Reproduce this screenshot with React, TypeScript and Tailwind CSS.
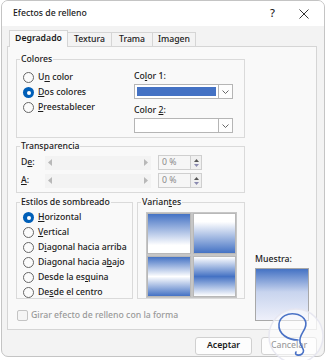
import React from "react";

const F = { fontFamily: '"Noto Sans", "Liberation Sans", sans-serif' };

function Radio({ checked }: { checked?: boolean }) {
  return checked ? (
    <span className="w-[11px] h-[11px] rounded-full bg-[#005fb8] flex items-center justify-center shrink-0">
      <span className="w-[4px] h-[4px] rounded-full bg-white" />
    </span>
  ) : (
    <span className="w-[11px] h-[11px] rounded-full border border-[#666] bg-[#fbfbfb] shrink-0" />
  );
}

function RadioRow({ checked, children }: { checked?: boolean; children: React.ReactNode }) {
  return (
    <div className="flex items-center gap-[4px] h-[15px]">
      <Radio checked={checked} />
      <span className="text-[8.7px] font-medium text-[#1b1b1b] whitespace-nowrap">{children}</span>
    </div>
  );
}

function Chevron() {
  return (
    <svg width="7" height="4" viewBox="0 0 7 4">
      <path d="M0.5 0.5 L3.5 3.5 L6.5 0.5" fill="none" stroke="#555" strokeWidth="0.9" />
    </svg>
  );
}

function ColorDrop({ color }: { color: string }) {
  return (
    <div className="flex h-[15px] w-[99px]">
      <div className="flex-1 border border-[#b5b5b5] bg-white p-[2px]">
        <div className="w-full h-full" style={{ background: color }} />
      </div>
      <div className="w-[14px] border border-l-0 border-[#b5b5b5] bg-[#fdfdfd] flex items-center justify-center">
        <Chevron />
      </div>
    </div>
  );
}

function Slider() {
  return (
    <div className="w-[106px] h-[14px] flex items-center justify-between px-[3px] bg-[#f3f3f3]">
      <svg width="4" height="7" viewBox="0 0 4 7"><path d="M4 0 L0 3.5 L4 7Z" fill="#b8b8b8" /></svg>
      <svg width="4" height="7" viewBox="0 0 4 7"><path d="M0 0 L4 3.5 L0 7Z" fill="#b8b8b8" /></svg>
    </div>
  );
}

function Spin() {
  return (
    <div className="flex h-[15px] w-[44px]">
      <div className="flex-1 border border-[#cfcfcf] bg-[#f6f6f6] text-[8.7px] text-[#8a8a8a] pl-[3px] leading-[13px]">0 %</div>
      <div className="w-[11px] border border-l-0 border-[#cfcfcf] bg-[#f0f0f0] flex flex-col items-center justify-center gap-[2px]">
        <svg width="5" height="3" viewBox="0 0 5 3"><path d="M0 3 L2.5 0 L5 3Z" fill="#555" /></svg>
        <svg width="5" height="3" viewBox="0 0 5 3"><path d="M0 0 L2.5 3 L5 0Z" fill="#8a8ab0" /></svg>
      </div>
    </div>
  );
}

function Group({ label, className, children }: { label: React.ReactNode; className?: string; children: React.ReactNode }) {
  return (
    <fieldset className={"border border-[#dadada] " + (className ?? "")}>
      <legend className="ml-[3px] px-[1px] text-[8.7px] font-medium leading-[12px] text-[#1b1b1b]">{label}</legend>
      {children}
    </fieldset>
  );
}

const B = "#4472c4";
const T = "text-[8.7px] font-medium text-[#1b1b1b]";

export default function App() {
  return (
    <div className="w-[328px] h-[360px] bg-white relative overflow-hidden" style={F}>
      <div className="ml-[1px] w-[324px] h-[357px] rounded-[7px] border border-[#c4c4c4] bg-[#f3f3f3] overflow-hidden flex flex-col">
        {/* title bar */}
        <div className="h-[25px] bg-white flex items-center pl-[11px] shrink-0">
          <span className={T}>Efectos de relleno</span>
          <span className="ml-auto text-[11px] font-medium text-[#222] mr-[24px]">?</span>
          <svg width="10" height="10" viewBox="0 0 10 10" className="mr-[15px]">
            <path d="M0.5 0.5 L9.5 9.5 M9.5 0.5 L0.5 9.5" stroke="#333" strokeWidth="1" />
          </svg>
        </div>
        <div className="flex-1 px-[5px] pt-[3px] flex flex-col">
          {/* tabs */}
          <div className="flex items-end h-[17px] pl-[2px]">
            <div className="h-[17px] w-[59px] border border-b-0 border-[#d5d5d5] bg-[#f9f9f9] text-[8.7px] font-semibold text-[#1b1b1b] flex items-center justify-center relative top-[1px] z-10">Degradado</div>
            <div className={"h-[14px] w-[44px] border border-l-0 border-b-0 border-[#d5d5d5] bg-[#f3f3f3] flex items-center justify-center " + T}>Textura</div>
            <div className={"h-[14px] w-[41px] border border-l-0 border-b-0 border-[#d5d5d5] bg-[#f3f3f3] flex items-center justify-center " + T}>Trama</div>
            <div className={"h-[14px] w-[43px] border border-l-0 border-b-0 border-[#d5d5d5] bg-[#f3f3f3] flex items-center justify-center " + T}>Imagen</div>
          </div>
          {/* panel */}
          <div className="w-[310px] h-[284px] border border-[#d5d5d5] bg-[#f9f9f9] pl-[8px] pt-[6px] flex flex-col">
            <Group label="Colores" className="w-[229px] h-[85px] flex">
              <div className="flex">
                <div className="pl-[6px] pt-[5px] w-[117px] flex flex-col">
                  <RadioRow>U<u>n</u> color</RadioRow>
                  <RadioRow checked><u>D</u>os colores</RadioRow>
                  <RadioRow><u>P</u>reestablecer</RadioRow>
                </div>
                <div className="pt-[5px] flex flex-col">
                  <span className={"leading-[13px] " + T}>Co<u>l</u>or 1:</span>
                  <div className="mt-[1px]"><ColorDrop color={B} /></div>
                  <span className={"leading-[13px] mt-[5px] " + T}>Color <u>2</u>:</span>
                  <div className="mt-[1px]"><ColorDrop color="#ffffff" /></div>
                </div>
              </div>
            </Group>
            <Group label="Transparencia" className="w-[229px] h-[53px] mt-[2px]">
              <div className="flex flex-col gap-[3px] pl-[4px] pt-[3px]">
                <div className="flex items-center">
                  <span className={"w-[24px] " + T}>D<u>e</u>:</span>
                  <Slider />
                  <div className="ml-[7px]"><Spin /></div>
                </div>
                <div className="flex items-center">
                  <span className={"w-[24px] " + T}><u>A</u>:</span>
                  <Slider />
                  <div className="ml-[7px]"><Spin /></div>
                </div>
              </div>
            </Group>
            <div className="flex mt-[3px]">
              <div className="flex flex-col">
                <div className="flex">
                  <Group label="Estilos de sombreado" className="w-[117px] h-[103px]">
                    <div className="pl-[6px] pt-[2px] flex flex-col">
                      <RadioRow checked><u>H</u>orizontal</RadioRow>
                      <RadioRow><u>V</u>ertical</RadioRow>
                      <RadioRow>D<u>i</u>agonal hacia arriba</RadioRow>
                      <RadioRow>Diagonal hacia a<u>b</u>ajo</RadioRow>
                      <RadioRow>Desde la es<u>q</u>uina</RadioRow>
                      <RadioRow>De<u>s</u>de el centro</RadioRow>
                    </div>
                  </Group>
                  <Group label={<>Varian<u>t</u>es</>} className="w-[108px] h-[103px] ml-[4px]">
                    <div className="pl-[8px] pt-[4px]">
                      <div className="grid grid-cols-2 gap-[2px] w-[91px] bg-[#c6c6c6] p-[1px]">
                        <div className="h-[41px] border border-[#b8b8b8]" style={{ background: `linear-gradient(to bottom, ${B} 0%, #ffffff 80%)` }} />
                        <div className="h-[41px] border border-[#b8b8b8]" style={{ background: `linear-gradient(to bottom, #ffffff 20%, ${B} 100%)` }} />
                        <div className="h-[41px] border border-[#b8b8b8]" style={{ background: `linear-gradient(to bottom, ${B} 0%, #ffffff 50%, ${B} 100%)` }} />
                        <div className="h-[41px] border border-[#b8b8b8]" style={{ background: `linear-gradient(to bottom, #ffffff 0%, ${B} 50%, #ffffff 100%)` }} />
                      </div>
                    </div>
                  </Group>
                </div>
                <div className="flex items-center gap-[3px] mt-[10px] pl-[1px]">
                  <span className="w-[11px] h-[11px] rounded-[2px] border border-[#c4c4c4] bg-[#f5f5f5]" />
                  <span className="text-[8.7px] font-medium text-[#9a9a9a]">Girar efecto de relleno con la forma</span>
                </div>
              </div>
              <div className="ml-[10px] pt-[57px] flex flex-col">
                <span className={"leading-[13px] " + T}>Muestra:</span>
                <div className="mt-[2px] w-[54px] h-[53px] border border-[#a8a8a8]" style={{ background: `linear-gradient(to bottom, ${B} 0%, #c8d4ee 45%, #eef0fa 100%)` }} />
              </div>
            </div>
          </div>
          {/* buttons */}
          <div className="flex justify-end gap-[9px] mt-[7px] pr-[2px]">
            <div className="w-[57px] h-[18px] rounded-[3px] border border-[#d0d0d0] bg-[#fdfdfd] text-[8.7px] font-semibold text-[#1b1b1b] flex items-center justify-center">Aceptar</div>
            <div className={"w-[56px] h-[18px] rounded-[3px] border border-[#d0d0d0] bg-[#fdfdfd] flex items-center justify-center " + T}>Cancelar</div>
          </div>
        </div>
      </div>
      {/* watermark */}
      <svg className="absolute left-[266px] top-[306px]" width="60" height="60" viewBox="0 0 60 60">
        <circle cx="30" cy="30" r="27" fill="rgba(255,255,255,0.55)" stroke="rgba(230,230,240,0.9)" strokeWidth="1.5" />
        <path d="M32 34 C 22 34, 12 28, 13 18 C 14 10, 22 7, 29 8 C 37 9, 42 15, 39 22 C 37 27, 33 30, 34 36 C 35 42, 40 44, 36 48 C 33 50, 28 49, 30 46" fill="none" stroke="#4a72c6" strokeWidth="1.6" strokeLinecap="round" />
      </svg>
    </div>
  );
}
